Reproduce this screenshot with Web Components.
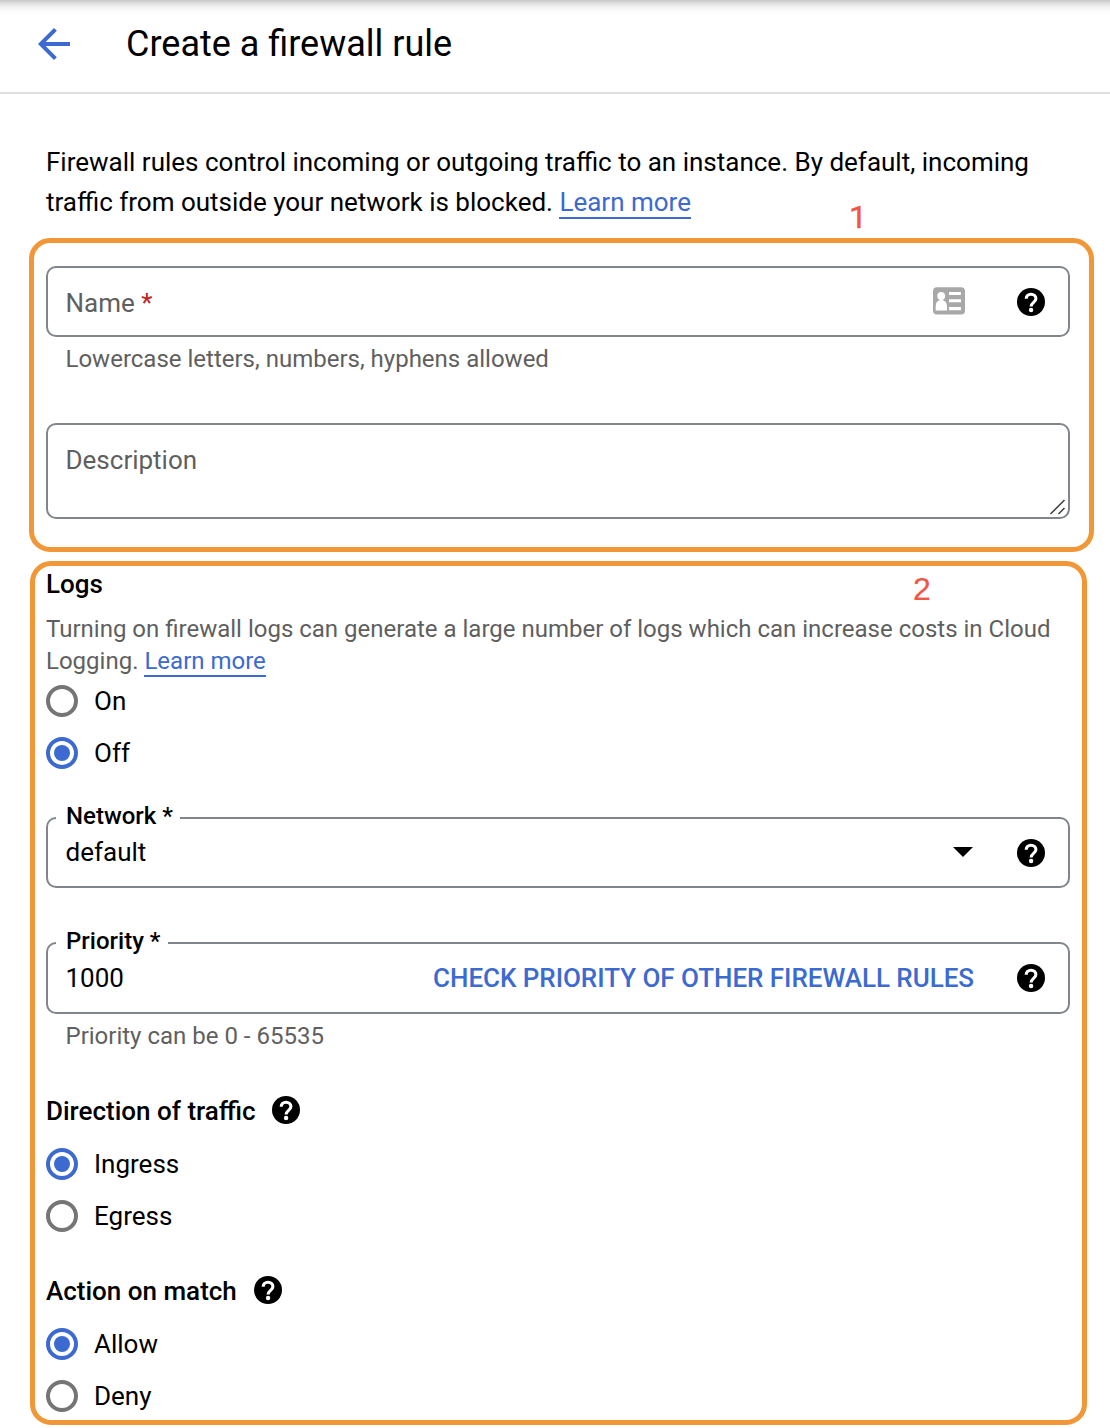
<!DOCTYPE html>
<html lang="en">
<head>
<meta charset="utf-8">
<title>Create a firewall rule</title>
<style>
  body { margin: 0; background: #fff; color: #000; font: 400 26px/32px Roboto, sans-serif; }
</style>
</head>
<body>
<firewall-page></firewall-page>

<script>
const define = (name, html, setup) => {
  const template = document.createElement('template');
  template.innerHTML = html;
  customElements.define(name, class extends HTMLElement {
    constructor() {
      super();
      this.attachShadow({ mode: 'open' }).append(template.content.cloneNode(true));
    }
    connectedCallback() { if (setup) setup(this, this.shadowRoot); }
  });
};

define('help-icon', `
  <style>
    :host { display: block; width: 28px; height: 28px; flex: none; }
    svg { display: block; }
  </style>
  <svg width="28" height="28" viewBox="0 0 28 28">
    <circle cx="14" cy="14" r="14" fill="#000"/>
    <path d="M9.2 10.8C9.2 8.1 11.3 6.2 14 6.2s4.9 1.9 4.9 4.4c0 3.7-4.8 3.9-4.8 8" fill="none" stroke="#fff" stroke-width="3.1"/>
    <circle cx="14.1" cy="22" r="2.2" fill="#fff"/>
  </svg>`);

define('contact-icon', `
  <style>:host { display: block; width: 32px; height: 28px; flex: none; } svg { display: block; }</style>
  <svg width="32" height="28" viewBox="0 0 32 28">
    <rect y=".2" width="32" height="27.4" rx="4" fill="#a8a8a8"/>
    <circle cx="8.2" cy="8.9" r="3.9" fill="#fff"/>
    <path d="M6.3 11h3.8v2.6c2.2.6 3.5 2 3.8 4.4l.2 5.4H2.6l.2-5.4c.3-2.4 1.5-3.8 3.5-4.4z" fill="#fff"/>
    <path d="M16 5h12v3H16zM16 12.3h12v3H16zM16 20h12v3.2H16z" fill="#fff"/>
  </svg>`);

define('text-link', `
  <style>
    :host { display: inline; }
    a { color: #3c6ad0; text-decoration: none; border-bottom: 2px solid #3c6ad0; }
  </style>
  <a><slot></slot></a>`);

define('page-header', `
  <style>
    :host { display: block; border-bottom: 2px solid #e0e0e0;
      background: linear-gradient(#c6c6c6, #dedede 3px, #f1f1f1 7px, #fbfbfb 11px, #fff 15px); }
    header { display: flex; align-items: center; height: 92px; padding: 0 38px 4px; box-sizing: border-box; gap: 56px; }
    h1 { margin: 0; font: 400 36px/44px Roboto, sans-serif; }
  </style>
  <header>
    <svg width="32" height="32" viewBox="4 4 16 16"><path fill="#3c6ad0" d="M20 11H7.83l5.59-5.59L12 4l-8 8 8 8 1.41-1.41L7.83 13H20z"/></svg>
    <h1><slot></slot></h1>
  </header>`);

define('callout-frame', `
  <style>
    :host { display: block; position: relative; box-sizing: border-box; border: 5px solid #f29737; border-radius: 21px; }
    b { position: absolute; font-weight: 400; font-size: 32px; line-height: 32px; color: #f05545; }
  </style>
  <slot></slot><b></b>`,
  (el, root) => {
    const b = root.querySelector('b');
    b.textContent = el.getAttribute('mark');
    b.style.cssText = el.getAttribute('mark-style');
  });

define('form-field', `
  <style>
    :host { display: block; }
    .box { position: relative; display: flex; align-items: center; box-sizing: border-box; height: var(--h, 71px);
      padding: 0 23px 0 17.5px; border: 2px solid #80868b; border-radius: 10px; }
    .label { position: absolute; left: 8px; top: -19px; padding: 0 7px 0 10px; background: #fff;
      font-size: 24px; font-weight: 500; }
    .label:empty { display: none; }
    .value { flex: 1; padding: var(--value-pad, 0); }
    .value.muted, .hint { color: #5f5f5f; }
    .end { display: flex; align-items: center; }
    .hint { padding: 6px 19.5px 0; font-size: 24px; }
    .hint:empty { display: none; }
  </style>
  <div class="box">
    <span class="label"></span>
    <div class="value"><slot></slot></div>
    <div class="end"><slot name="end"></slot></div>
  </div>
  <div class="hint"></div>`,
  (el, root) => {
    root.querySelector('.label').textContent = el.getAttribute('label') || '';
    root.querySelector('.hint').textContent = el.getAttribute('hint') || '';
    root.querySelector('.value').classList.toggle('muted', el.hasAttribute('placeholder'));
  });

define('description-field', `
  <style>
    :host { display: block; position: relative; box-sizing: border-box; height: 96px; padding: 19px 17.5px;
      border: 2px solid #80868b; border-radius: 10px; color: #5f5f5f; }
    svg { position: absolute; right: 1px; bottom: 1px; }
  </style>
  <slot></slot>
  <svg width="18" height="18" viewBox="0 0 18 18"><path d="M1.5 16 15.5 2M9.5 16l6-6" stroke="#444" stroke-width="1.6" fill="none"/></svg>`);

define('radio-option', `
  <style>
    :host { display: flex; align-items: center; gap: 16px; height: 32px; }
    i { display: grid; place-items: center; box-sizing: border-box; width: 32px; height: 32px;
      border: 4px solid #757575; border-radius: 50%; }
    :host([checked]) i { border-color: #3c6ad0; }
    :host([checked]) i::after { content: ""; width: 16px; height: 16px; border-radius: 50%; background: #3c6ad0; }
  </style>
  <i></i><span><slot></slot></span>`);

define('radio-list', `
  <style>:host { display: flex; flex-direction: column; gap: 20px; }</style>
  <slot></slot>`);

define('section-title', `
  <style>
    :host { display: flex; align-items: center; gap: 16.75px; height: 32px; font-weight: 500; }
    ::slotted(help-icon) { margin-top: -2px; }
  </style>
  <span><slot></slot></span><slot name="help"></slot>`);

define('firewall-page', `
  <style>
    :host { display: block; height: 1428px; overflow: hidden; }
    .intro { margin: 0; padding: 48px 46px 16px; line-height: 40px; }
    .identity { width: 1065px; height: 314px; margin-left: 29px; padding: 23px 19px 0 12px; }
    .identity form-field { --value-pad: 2px 0 0; margin-bottom: 48px; }
    .rules { width: 1057px; height: 864px; margin: 9px 0 0 30px; padding: 2px 12px 0 11px; }
    .note { margin: 13px 0 8px; font-size: 24px; color: #5f5f5f; }
    .req { color: #c5221f; }
    .network { --value-pad: 0 0 1px; margin-top: 48px; }
    .priority { --h: 72px; margin: 54px 0 43px; }
    .direction { margin-bottom: 43px; }
    section-title + radio-list { margin-top: 21px; }
    .traffic { gap: 16.2px; }
    .arrow { margin: -2px 44px 0 0; }
    .check { margin-right: 43px; color: #3c6ad0; font-weight: 500; letter-spacing: -.04px; }
    contact-icon { margin: -2px 52px 0 0; }
  </style>
  <page-header>Create a firewall rule</page-header>
  <p class="intro">Firewall rules control incoming or outgoing traffic to an instance. By default, incoming<br>traffic from outside your network is blocked. <text-link>Learn more</text-link></p>
  <callout-frame class="identity" mark="1" mark-style="left:815px;top:-42px;-webkit-text-stroke:.4px #f05545">
    <form-field placeholder hint="Lowercase letters, numbers, hyphens allowed">Name <span class="req">*</span><contact-icon slot="end"></contact-icon><help-icon slot="end"></help-icon></form-field>
    <description-field>Description</description-field>
  </callout-frame>
  <callout-frame class="rules" mark="2" mark-style="left:878px;top:7px;font-family:'Liberation Sans',sans-serif;-webkit-text-stroke:.2px #f05545">
    <section-title>Logs</section-title>
    <p class="note">Turning on firewall logs can generate a large number of logs which can increase costs in Cloud<br>Logging. <text-link>Learn more</text-link></p>
    <radio-list>
      <radio-option>On</radio-option>
      <radio-option checked>Off</radio-option>
    </radio-list>
    <form-field class="network" label="Network *">default<svg slot="end" class="arrow" width="20" height="10" viewBox="0 0 20 10"><path d="M0 0h20L10 10z"/></svg><help-icon slot="end"></help-icon></form-field>
    <form-field class="priority" label="Priority *" hint="Priority can be 0 - 65535">1000<span slot="end" class="check">CHECK PRIORITY OF OTHER FIREWALL RULES</span><help-icon slot="end"></help-icon></form-field>
    <section-title class="traffic">Direction of traffic<help-icon slot="help"></help-icon></section-title>
    <radio-list class="direction">
      <radio-option checked>Ingress</radio-option>
      <radio-option>Egress</radio-option>
    </radio-list>
    <section-title>Action on match<help-icon slot="help"></help-icon></section-title>
    <radio-list>
      <radio-option checked>Allow</radio-option>
      <radio-option>Deny</radio-option>
    </radio-list>
  </callout-frame>`);
</script>
</body>
</html>
